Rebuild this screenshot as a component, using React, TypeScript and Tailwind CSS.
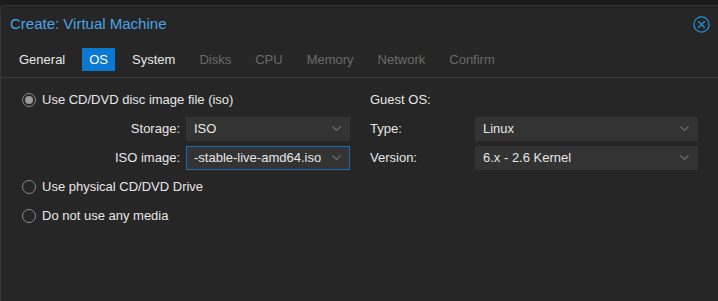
import { ReactNode } from 'react';

const tabs = [
  { name: 'General', active: false, enabled: true },
  { name: 'OS', active: true, enabled: true },
  { name: 'System', active: false, enabled: true },
  { name: 'Disks', active: false, enabled: false },
  { name: 'CPU', active: false, enabled: false },
  { name: 'Memory', active: false, enabled: false },
  { name: 'Network', active: false, enabled: false },
  { name: 'Confirm', active: false, enabled: false },
];

function Chevron() {
  return (
    <svg width="9" height="6" viewBox="0 0 9 6" className="shrink-0">
      <polyline points="0.5,0.5 4.5,4.5 8.5,0.5" fill="none" stroke="#6e6e6e" strokeWidth="1.2" />
    </svg>
  );
}

function Combo({ value, focused, width }: { value: string; focused?: boolean; width: string }) {
  return (
    <div
      className={`${width} h-[24px] flex items-center justify-between pl-[7px] pr-[8px] bg-[#333333] border ${
        focused ? 'border-[#1a6aad]' : 'border-transparent'
      }`}
    >
      <span className="truncate text-[#e6e6e6]">{value}</span>
      <Chevron />
    </div>
  );
}

function Radio({ checked, children }: { checked?: boolean; children: ReactNode }) {
  return (
    <div className="h-[24px] flex items-center gap-[6px]">
      <span className="w-[14px] h-[14px] rounded-full border-[1.5px] border-[#8a8a8a] flex items-center justify-center">
        {checked && <span className="w-[8px] h-[8px] rounded-full bg-[#9a9a9a]" />}
      </span>
      <span className="text-[#e6e6e6]">{children}</span>
    </div>
  );
}

export default function App() {
  return (
    <div
      className="w-[718px] h-[301px] overflow-hidden bg-[#1b1b1b] pt-[5px] text-[13px]"
      style={{ fontFamily: '"Liberation Sans", Arial, sans-serif' }}
    >
      <div className="h-full bg-[#262626] border-l border-t border-[#363636] rounded-tl-[4px]">
        {/* Title bar */}
        <div className="h-[36px] flex items-center justify-between pl-[9px] pr-[8px]">
          <span className="text-[15px] text-[#48a4e6]">Create: Virtual Machine</span>
          <svg width="17" height="17" viewBox="0 0 17 17">
            <circle cx="8.5" cy="8.5" r="7.6" fill="none" stroke="#2290d4" strokeWidth="1.3" />
            <line x1="5.3" y1="5.3" x2="11.7" y2="11.7" stroke="#2290d4" strokeWidth="1.3" />
            <line x1="11.7" y1="5.3" x2="5.3" y2="11.7" stroke="#2290d4" strokeWidth="1.3" />
          </svg>
        </div>

        {/* Tabs */}
        <div className="h-[36px] flex items-center gap-[10px] pl-[11px] border-b border-[#3c3c3c]">
          {tabs.map((t) => (
            <div
              key={t.name}
              className={`h-[23px] px-[7px] flex items-center rounded-[1px] ${
                t.active ? 'bg-[#0b78d1] text-white' : t.enabled ? 'text-[#e8e8e8]' : 'text-[#6a6a6a]'
              }`}
            >
              {t.name}
            </div>
          ))}
        </div>

        {/* Body */}
        <div className="pt-[10px] pl-[21px] flex gap-[20px]">
          <div className="w-[328px] flex flex-col gap-[5px]">
            <Radio checked>Use CD/DVD disc image file (iso)</Radio>
            <div className="flex items-center gap-[6px]">
              <span className="w-[158px] text-right text-[#e6e6e6]">Storage:</span>
              <Combo value="ISO" width="w-[164px]" />
            </div>
            <div className="flex items-center gap-[6px]">
              <span className="w-[158px] text-right text-[#e6e6e6]">ISO image:</span>
              <Combo value="-stable-live-amd64.iso" focused width="w-[164px]" />
            </div>
            <Radio>Use physical CD/DVD Drive</Radio>
            <Radio>Do not use any media</Radio>
          </div>

          <div className="w-[328px] flex flex-col gap-[5px]">
            <div className="h-[24px] flex items-center text-[#e6e6e6]">Guest OS:</div>
            <div className="flex items-center">
              <span className="w-[105px] text-[#e6e6e6]">Type:</span>
              <Combo value="Linux" width="w-[223px]" />
            </div>
            <div className="flex items-center">
              <span className="w-[105px] text-[#e6e6e6]">Version:</span>
              <Combo value="6.x - 2.6 Kernel" width="w-[223px]" />
            </div>
          </div>
        </div>
      </div>
    </div>
  );
}
